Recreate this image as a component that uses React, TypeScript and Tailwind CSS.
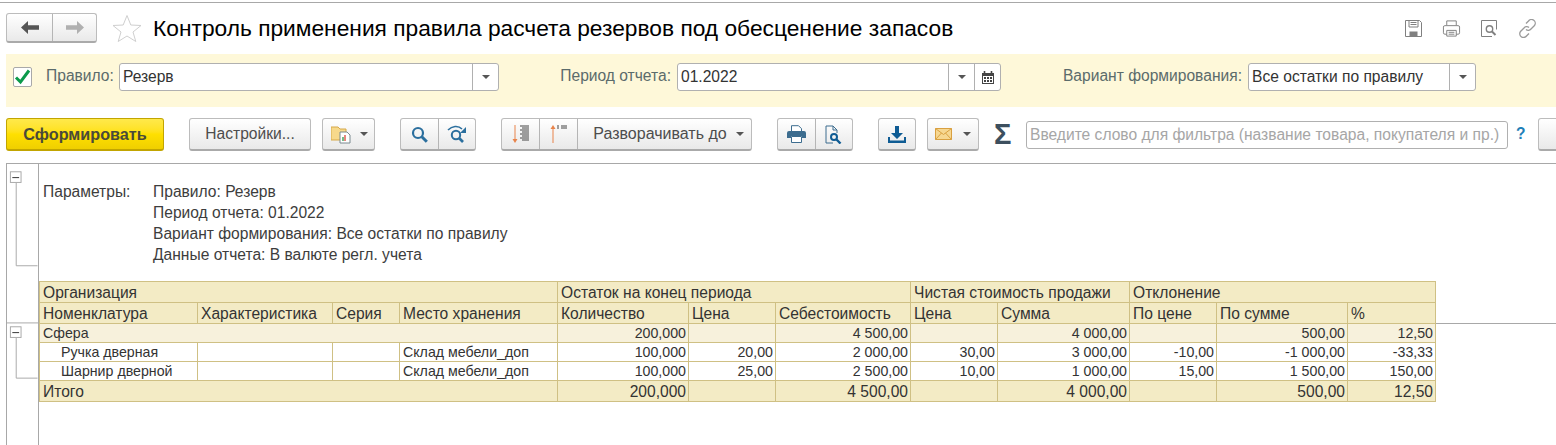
import React from "react";

const Caret = () => (
  <svg width="8" height="4" viewBox="0 0 8 4" className="block"><path d="M0 0h8L4 4z" fill="#555" /></svg>
);

const btn = "flex shrink-0 items-center justify-center h-[33px] rounded-[3px] border border-[#bcbcbc] border-b-2 border-b-[#aaaaaa] bg-gradient-to-b from-white to-[#e9e9e9] text-[#4d4d4d]";
const seg = "flex items-center justify-center h-full border-r border-[#b5b5b5]";

function Field({ width, value, buttons }: { width: string; value: string; buttons: React.ReactNode }) {
  return (
    <div className={`flex h-[28px] ml-[6px] shrink-0 rounded-[3px] border border-[#b0b0b0] bg-white ${width}`}>
      <div className="flex-1 pl-[3px] text-[15.6px] leading-[25px] text-[#333]">{value}</div>
      {buttons}
    </div>
  );
}

const DropCell = () => (
  <div className="flex w-[26px] items-center justify-center border-l border-[#b0b0b0]"><Caret /></div>
);

const cellBorder = "border border-[#cfc084] px-[3px] whitespace-nowrap overflow-hidden";
const numCell = `${cellBorder} pr-[2px] text-right`;

function HeaderRow({ cells }: { cells: [string, number][] }) {
  return (
    <tr className="h-[21px] bg-[#f3ebc5] text-[15.6px] leading-[18px] text-[#333]">
      {cells.map(([t, span], i) => (
        <td key={i} colSpan={span} className={`${cellBorder} pt-[2px]`}>{t}</td>
      ))}
    </tr>
  );
}

function DataRow({ cells }: { cells: string[] }) {
  return (
    <tr className="h-[19px] bg-white text-[14.2px] leading-[16px] text-[#333]">
      {cells.map((t, i) => (
        <td key={i} className={`${i > 3 ? numCell : cellBorder} ${i === 0 ? "pl-[21px]" : ""}`}>{t}</td>
      ))}
    </tr>
  );
}

const widths = [158, 135, 67, 158, 131, 87, 135, 87, 132, 87, 131, 88];

export default function App() {
  return (
    <div className="relative h-[445px] w-[1556px] overflow-hidden bg-white font-['Liberation_Sans',Arial,sans-serif]">
      <div className="mt-[2px] h-px bg-[#a8a8a8]" />

      {/* Title row */}
      <div className="flex h-[30px] items-center mt-[10px] pl-[6px]">
        <div className={`${btn} !h-[30px] w-[91px]`}>
          <div className={`${seg} w-[46px]`}>
            <svg width="18" height="13" viewBox="0 0 18 13"><path d="M0 6.5 7 0v4.2h11v4.6H7V13z" fill="#555" /></svg>
          </div>
          <div className="flex h-full flex-1 items-center justify-center">
            <svg width="18" height="13" viewBox="0 0 18 13"><path d="M18 6.5 11 0v4.2H0v4.6h11V13z" fill="#b0b0b0" /></svg>
          </div>
        </div>
        <svg className="ml-[15px]" width="30" height="28" viewBox="0 0 30 28">
          <path d="M15 1.5 18.8 11 29 11.5 21 18l2.8 9.5L15 22l-8.8 5.5L9 18 1 11.5 11.2 11z" fill="none" stroke="#cfcfcf" strokeWidth="1" />
        </svg>
        <div className="ml-[11px] flex-1 whitespace-nowrap text-[22.76px] leading-[30px] text-black">Контроль применения правила расчета резервов под обесценение запасов</div>
        <div className="mr-[19px] flex items-center gap-[19px]">
          <svg width="19" height="19" viewBox="0 0 19 19" fill="none" stroke="#808080"><path d="M1.5 1.5h14l2 2v14h-16z" /><path d="M5 1.5v6.5h9V1.5M6.5 3.5h6M6.5 5.5h6" /><rect x="6" y="13" width="7" height="4.5" fill="#808080" /></svg>
          <svg width="19" height="19" viewBox="0 0 20 19" fill="none" stroke="#808080"><path d="M5 6V1.5h10V6M3 6.5h14a1.5 1.5 0 0 1 1.5 1.5v6a1.5 1.5 0 0 1-1.5 1.5h-2M5 15.5H3A1.5 1.5 0 0 1 1.5 14V8A1.5 1.5 0 0 1 3 6.5" /><path d="M5 11.5h10v6H5zM7 13.5h6M7 15.5h6" /></svg>
          <svg width="19" height="19" viewBox="0 0 19 19" fill="none" stroke="#808080"><path d="M12 17.5H1.5v-16h15v9" /><circle cx="9.5" cy="10" r="3.2" strokeWidth="1.4" /><path d="m12 12.5 3.5 3.5" strokeWidth="2" /></svg>
          <svg width="19" height="19" viewBox="0 0 19 19" fill="none" stroke="#9a9a9a" strokeWidth="1.3"><path d="M8 4.5 10.5 2a3.5 3.5 0 0 1 6 4.5L13 10a3.5 3.5 0 0 1-5 .5" /><path d="M11 14.5 8.5 17a3.5 3.5 0 0 1-6-4.5L6 9a3.5 3.5 0 0 1 5-.5" /></svg>
        </div>
      </div>

      {/* Filter band */}
      <div className="ml-[6px] mt-[11px] flex h-[53px] items-start bg-[#fef8d9] pt-[9px] text-[15.6px] leading-[26px] text-[#5b6b6b]">
        <div className="ml-[7px] mt-[4px] flex h-[20px] w-[19px] shrink-0 items-center justify-center rounded-[2px] border border-[#a9a9a9] bg-white">
          <svg width="17" height="16" viewBox="0 0 17 16"><path d="M2 8.5 6.5 13 15 1.5" fill="none" stroke="#0b9a4b" strokeWidth="3" /></svg>
        </div>
        <div className="ml-[14px] w-[67px] shrink-0 whitespace-nowrap text-right">Правило:</div>
        <Field width="w-[380px]" value="Резерв" buttons={<DropCell />} />
        <div className="ml-[61px] w-[111px] shrink-0 whitespace-nowrap text-right">Период отчета:</div>
        <Field
          width="w-[324px]"
          value="01.2022"
          buttons={
            <>
              <DropCell />
              <div className="flex w-[26px] items-center justify-center border-l border-[#b0b0b0]">
                <svg width="12" height="13" viewBox="0 0 12 13"><path d="M0 2h12v11H0z" fill="#444" /><path d="M2.5 0v3M9.5 0v3" stroke="#444" strokeWidth="1.6" /><path d="M1 5h10v7H1z" fill="#fff" /><path d="M2 6h2v2H2zM5 6h2v2H5zM8 6h2v2H8zM2 9h2v2H2zM5 9h2v2H5zM8 9h2v2H8z" fill="#444" /></svg>
              </div>
            </>
          }
        />
        <div className="ml-[61px] flex w-[180px] shrink-0 justify-end whitespace-nowrap">Вариант формирования:</div>
        <Field width="w-[228px]" value="Все остатки по правилу" buttons={<DropCell />} />
      </div>

      {/* Toolbar */}
      <div className="ml-[6px] mt-[11px] flex h-[33px] items-start">
        <div className="flex h-[33px] w-[158px] shrink-0 items-center justify-center rounded-[3px] border border-[#c2a500] border-b-2 bg-gradient-to-b from-[#ffe94a] via-[#ffe000] to-[#efcf00] text-[16.2px] font-bold text-[#4a4a3a]">Сформировать</div>
        <div className={`${btn} ml-[25px] w-[122px] text-[15.6px]`}>Настройки...</div>
        <div className={`${btn} ml-[11px] w-[53px] gap-[9px] pl-[2px]`}>
          <svg width="20" height="20" viewBox="0 0 20 20"><path d="M0 3h7l2 2h6v11H0z" fill="#f7d98b" stroke="#d6a94a" /><path d="M9 8h7l3 3v8H9z" fill="#fff" stroke="#7b8a90" /><path d="M12 17v-4" stroke="#2a9a4a" strokeWidth="1.3" /><path d="M14 17v-6" stroke="#d9483b" strokeWidth="1.3" /></svg>
          <Caret />
        </div>
        <div className={`${btn} ml-[25px] w-[76px]`}>
          <div className={`${seg} w-[38px]`}>
            <svg width="17" height="17" viewBox="0 0 17 17" fill="none" stroke="#2b6f9e"><circle cx="7" cy="7" r="5" strokeWidth="2.2" /><path d="m10.8 10.8 5 5" strokeWidth="3" /></svg>
          </div>
          <div className="flex h-full flex-1 items-center justify-center">
            <svg width="20" height="18" viewBox="0 0 20 18" fill="none" stroke="#2b6f9e"><circle cx="9" cy="10" r="4.2" strokeWidth="2" /><path d="m12 13 4 4" strokeWidth="2.6" /><path d="M1 5c4-4 10-5 14-1" strokeWidth="1.6" /><path d="M19 2v6h-6z" fill="#2b6f9e" stroke="none" /></svg>
          </div>
        </div>
        <div className={`${btn} ml-[25px] w-[251px]`}>
          <div className={`${seg} w-[38px]`}>
            <svg width="18" height="20" viewBox="0 0 18 20" fill="none"><path d="M3 1v15" stroke="#e8834a" /><path d="M0.5 15h5L3 19z" fill="#e8834a" /><path d="M8 2h9M10 4h7M8 6h9M10 8h7M8 10h9M10 12h7M8 14h9M10 16h7" stroke="#444" /></svg>
          </div>
          <div className={`${seg} w-[38px]`}>
            <svg width="18" height="20" viewBox="0 0 18 20" fill="none"><path d="M3 4v15" stroke="#e8834a" /><path d="M0.5 5h5L3 1z" fill="#e8834a" /><path d="M7 2h2M11 2h6M7 4h2M11 4h6" stroke="#444" /></svg>
          </div>
          <div className="flex h-full flex-1 items-center justify-center gap-[9px] pl-[8px] whitespace-nowrap text-[16px]">
            <span>Разворачивать до</span>
            <Caret />
          </div>
        </div>
        <div className={`${btn} ml-[25px] w-[76px]`}>
          <div className={`${seg} w-[38px]`}>
            <svg width="19" height="18" viewBox="0 0 19 18"><path d="M4.5 6V.7h7l3 3V6" fill="#fff" stroke="#3d6d8f" /><path d="M2 6h15a2 2 0 0 1 2 2v5h-4v-2H4v2H0V8a2 2 0 0 1 2-2z" fill="#3d6d8f" /><path d="M4.5 11.5h10v6h-10z" fill="#fff" stroke="#3d6d8f" /></svg>
          </div>
          <div className="flex h-full flex-1 items-center justify-center">
            <svg width="18" height="19" viewBox="0 0 18 19" fill="none"><path d="M8 18H1V1h7l4 4v3" stroke="#3d6d8f" /><path d="M8 1v4h4" stroke="#3d6d8f" /><circle cx="9" cy="12" r="3" stroke="#0f5c94" strokeWidth="2" /><path d="m11.5 14.5 4 4" stroke="#0f5c94" strokeWidth="2.4" /></svg>
          </div>
        </div>
        <div className={`${btn} ml-[25px] w-[38px]`}>
          <svg width="18" height="17" viewBox="0 0 18 17" fill="#0f5c94"><path d="M7 0h4v7h4l-6 6-6-6h4z" /><path d="M0 11h2v3.5h14V11h2v6H0z" /></svg>
        </div>
        <div className={`${btn} ml-[11px] w-[52px] gap-[11px]`}>
          <svg width="17" height="12" viewBox="0 0 17 12"><path d="M.5.5h16v11H.5z" fill="#f6d791" stroke="#d9a040" /><path d="m.5.5 8 6 8-6M.5 11.5l6-6.5M16.5 11.5l-6-6.5" fill="none" stroke="#d9a040" /></svg>
          <Caret />
        </div>
        <div className="ml-[15px] mt-[3px] w-[16px] shrink-0 text-center text-[29px] font-bold leading-[27px] text-[#3d4f5e]">Σ</div>
        <div className="ml-[16px] mt-[3px] h-[28px] w-[482px] shrink-0 rounded-[3px] border border-[#b0b0b0] pl-[3px] text-[15.6px] leading-[25px] text-[#a6a6a6] whitespace-nowrap">Введите слово для фильтра (название товара, покупателя и пр.)</div>
        <div className="ml-[8px] mt-[3px] w-[8px] shrink-0 text-[15.6px] font-bold leading-[26px] text-[#1f7fb8]">?</div>
        <div className={`${btn} ml-[14px] w-[40px]`} />
      </div>

      {/* Report */}
      <div className="ml-[6px] mt-[12px] flex h-[282px] border-t border-l border-[#a8a8a8]">
        <svg width="32" height="281" viewBox="0 0 32 281" className="block shrink-0 border-r border-[#a8a8a8]" fill="none">
          <path d="M9.5 15v85.5h22" stroke="#a8a8a8" />
          <rect x="3.5" y="3.5" width="11" height="11" fill="#fff" stroke="#a8a8a8" />
          <path d="M5.5 9.5h7" stroke="#333" />
          <path d="M0 159.5h32" stroke="#a8a8a8" />
          <path d="M9.5 175v41.5h22" stroke="#a8a8a8" />
          <rect x="3.5" y="163.5" width="11" height="11" fill="#fff" stroke="#a8a8a8" />
          <path d="M5.5 169.5h7" stroke="#333" />
        </svg>
        <div className="flex-1 overflow-hidden">
          <div className="flex h-[117px] pl-[4px] pt-[17px] text-[15.6px] leading-[21px] text-[#3d3d3d]">
            <div className="w-[110px]">Параметры:</div>
            <div>
              <div>Правило: Резерв</div>
              <div>Период отчета: 01.2022</div>
              <div>Вариант формирования: Все остатки по правилу</div>
              <div>Данные отчета: В валюте регл. учета</div>
            </div>
          </div>
          <div className="flex items-start">
            <table className="table-fixed border-collapse" style={{ width: 1397 }}>
              <colgroup>
                {widths.map((w, i) => <col key={i} style={{ width: w }} />)}
              </colgroup>
              <tbody>
                <HeaderRow cells={[["Организация", 4], ["Остаток на конец периода", 3], ["Чистая стоимость продажи", 2], ["Отклонение", 3]]} />
                <HeaderRow cells={[["Номенклатура", 1], ["Характеристика", 1], ["Серия", 1], ["Место хранения", 1], ["Количество", 1], ["Цена", 1], ["Себестоимость", 1], ["Цена", 1], ["Сумма", 1], ["По цене", 1], ["По сумме", 1], ["%", 1]]} />
                <tr className="h-[19px] bg-[#f7f1dc] text-[14.2px] leading-[16px] text-[#333] [&>td]:border-t-[#a8a8a8]">
                  <td colSpan={4} className={cellBorder}>Сфера</td>
                  {["200,000", "", "4 500,00", "", "4 000,00", "", "500,00", "12,50"].map((t, i) => (
                    <td key={i} className={numCell}>{t}</td>
                  ))}
                </tr>
                <DataRow cells={["Ручка дверная", "", "", "Склад мебели_доп", "100,000", "20,00", "2 000,00", "30,00", "3 000,00", "-10,00", "-1 000,00", "-33,33"]} />
                <DataRow cells={["Шарнир дверной", "", "", "Склад мебели_доп", "100,000", "25,00", "2 500,00", "10,00", "1 000,00", "15,00", "1 500,00", "150,00"]} />
                <tr className="h-[21px] bg-[#f3ebc5] text-[15.6px] leading-[16px] text-[#333]">
                  <td colSpan={4} className={`${cellBorder} pt-[2px]`}>Итого</td>
                  {["200,000", "", "4 500,00", "", "4 000,00", "", "500,00", "12,50"].map((t, i) => (
                    <td key={i} className={`${numCell} pt-[2px]`}>{t}</td>
                  ))}
                </tr>
              </tbody>
            </table>
            <div className="mt-[42px] h-px flex-1 bg-[#a8a8a8]" />
          </div>
        </div>
      </div>
    </div>
  );
}
